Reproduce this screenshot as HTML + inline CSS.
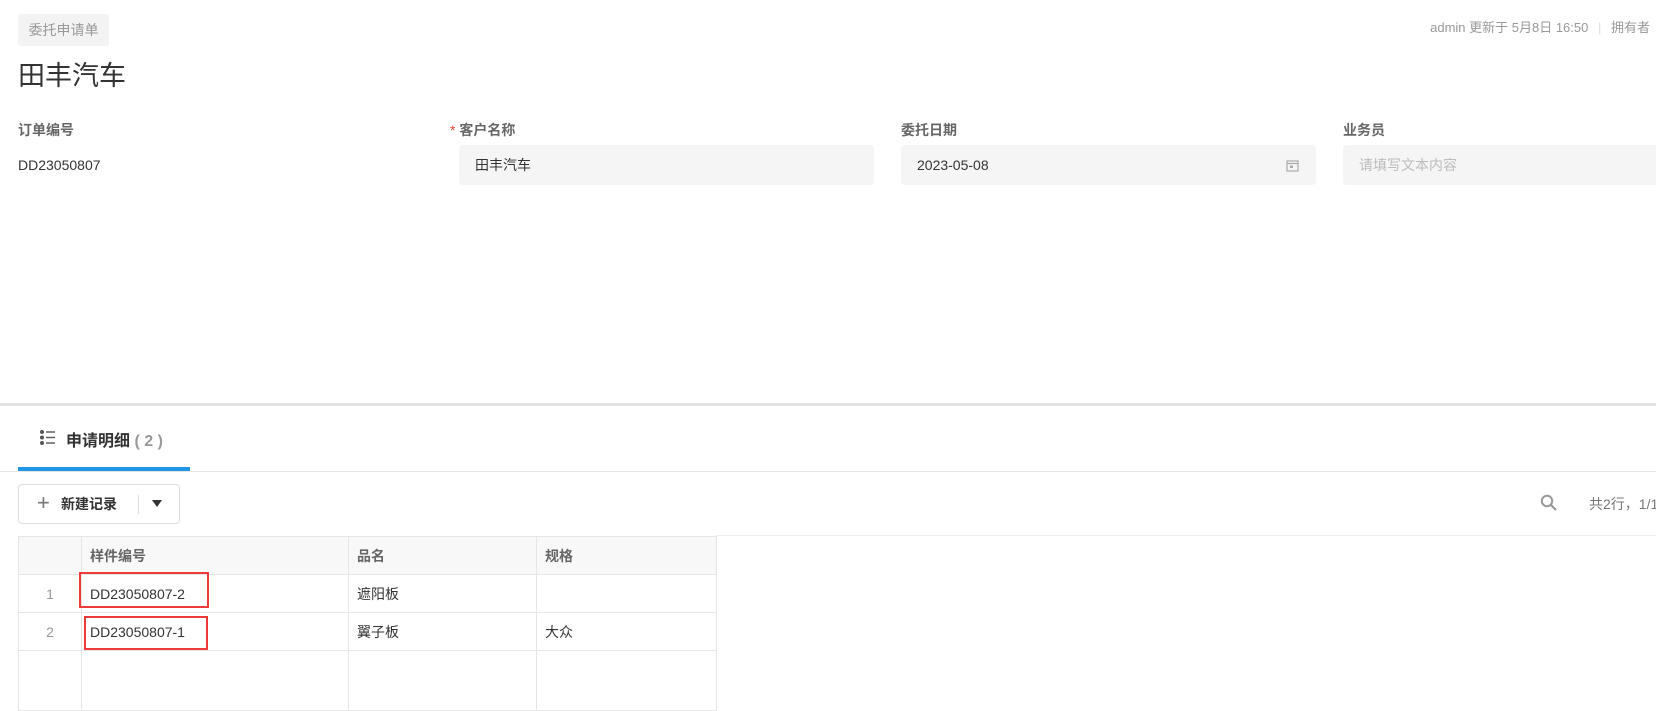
<!DOCTYPE html>
<html><head><meta charset="utf-8"><style>
*{margin:0;padding:0;box-sizing:border-box}
body{width:1656px;height:684px;overflow:hidden;background:#fff;font-family:"Liberation Sans","Noto Sans CJK SC",sans-serif;color:#333;position:relative}
.a{position:absolute;white-space:nowrap}
.tag{left:18px;top:14px;width:91px;height:32px;background:#f3f3f3;border-radius:3px;color:#999;font-size:14px;line-height:32px;text-align:center}
.title{left:18px;top:58px;font-size:27px;color:#333;line-height:36px}
.meta{right:6px;top:17px;font-size:13px;color:#999}
.lbl{font-size:14px;color:#666;font-weight:bold;top:120px}
.inp{top:145px;width:415px;height:40px;background:#f5f5f5;border-radius:4px;font-size:14px;line-height:40px;padding-left:16px}
.tbl{left:18px;top:536px;border-collapse:collapse;font-size:14px}
.tbl td{border:1px solid #e6e6e6;height:38px;padding-left:8px;color:#333}
.tbl tr.h td{background:#f8f8f8;color:#666;font-weight:bold}
.tbl td.n{text-align:center;padding-left:0;color:#999;background:#f8f8f8}
.red{border:2px solid #f03a3a}
</style></head><body>
<div class="a tag">委托申请单</div>
<div class="a title">田丰汽车</div>
<div class="a meta">admin 更新于 5月8日 16:50 <span style="color:#ddd;margin:0 6px">|</span> 拥有者</div>

<div class="a lbl" style="left:18px">订单编号</div>
<div class="a" style="left:18px;top:155px;font-size:14px;line-height:20px">DD23050807</div>
<div class="a lbl" style="left:450px"><span style="color:#f5483b;font-weight:normal">*</span> 客户名称</div>
<div class="a inp" style="left:459px">田丰汽车</div>
<div class="a lbl" style="left:901px">委托日期</div>
<div class="a inp" style="left:901px">2023-05-08
<svg style="position:absolute;left:385px;top:14px" width="13" height="13" viewBox="0 0 13 13"><rect x="1" y="2" width="11" height="10" fill="none" stroke="#aaa" stroke-width="1.2"/><line x1="1" y1="4.5" x2="12" y2="4.5" stroke="#aaa" stroke-width="1.2"/><rect x="4" y="6.5" width="3" height="2.5" fill="#aaa"/></svg></div>
<div class="a lbl" style="left:1343px">业务员</div>
<div class="a inp" style="left:1343px;width:320px;color:#bbb">请填写文本内容</div>

<div class="a" style="left:0;top:403px;width:1656px;height:3px;background:#e3e3e3"></div>
<svg class="a" style="left:40px;top:430px" width="15" height="15" viewBox="0 0 15 15"><circle cx="2" cy="2" r="2" fill="#555"/><circle cx="2" cy="7.5" r="2" fill="#555"/><circle cx="2" cy="13" r="2" fill="#555"/><rect x="6" y="1.3" width="9" height="1.4" fill="#555"/><rect x="6" y="6.8" width="9" height="1.4" fill="#555"/><rect x="6" y="12.3" width="9" height="1.4" fill="#555"/></svg>
<div class="a" style="left:66px;top:427px;font-size:16px;font-weight:bold;color:#333">申请明细 <span style="color:#999">( 2 )</span></div>
<div class="a" style="left:18px;top:467px;width:172px;height:4px;background:#2196e8"></div>
<div class="a" style="left:0;top:471px;width:1656px;height:1px;background:#e6e6e6"></div>

<div class="a" style="left:18px;top:484px;width:162px;height:40px;border:1px solid #ddd;border-radius:4px"></div>
<div class="a" style="left:37px;top:492px;font-size:22px;color:#777;line-height:22px;font-weight:300">+</div>
<div class="a" style="left:61px;top:494px;font-size:14px;font-weight:bold;color:#333">新建记录</div>
<div class="a" style="left:138px;top:495px;width:1px;height:19px;background:#ddd"></div>
<div class="a" style="left:152px;top:500px;width:0;height:0;border-left:5px solid transparent;border-right:5px solid transparent;border-top:7px solid #333"></div>

<svg class="a" style="left:1540px;top:494px" width="18" height="18" viewBox="0 0 18 18"><circle cx="7" cy="7" r="5.2" fill="none" stroke="#999" stroke-width="2"/><line x1="11" y1="11" x2="16" y2="16" stroke="#999" stroke-width="2.2"/></svg>
<div class="a" style="left:1589px;top:494px;font-size:14px;color:#777">共2行，1/1</div>
<div class="a" style="left:716px;top:535px;width:940px;height:1px;background:#eee"></div>

<table class="a tbl">
<tr class="h"><td class="n" style="width:63px"></td><td style="width:267px">样件编号</td><td style="width:188px">品名</td><td style="width:180px">规格</td></tr>
<tr><td class="n" style="background:#fff">1</td><td>DD23050807-2</td><td>遮阳板</td><td></td></tr>
<tr><td class="n" style="background:#fff">2</td><td>DD23050807-1</td><td>翼子板</td><td>大众</td></tr>
<tr><td class="n" style="background:#fff;height:60px"></td><td style="height:60px"></td><td></td><td></td></tr>
</table>
<div class="a red" style="left:79px;top:572px;width:130px;height:36px"></div>
<div class="a red" style="left:84px;top:616px;width:124px;height:34px"></div>
</body></html>
